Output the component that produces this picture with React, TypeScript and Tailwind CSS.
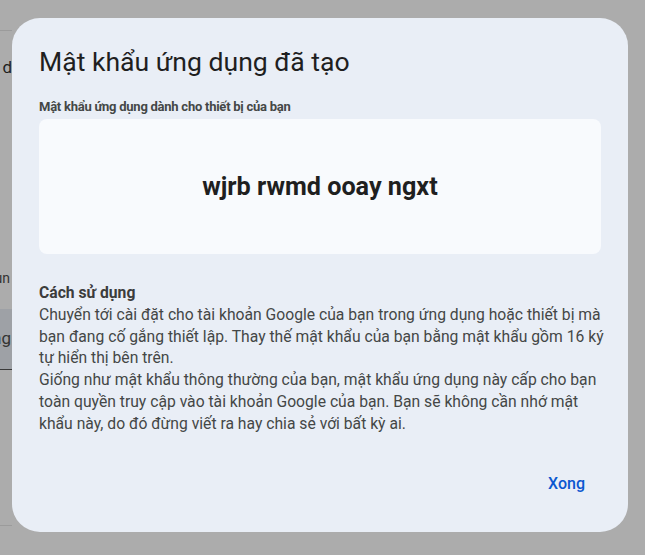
const bodyFont = { fontFamily: "Roboto, 'Noto Sans', sans-serif" };

function BackdropPage() {
  // the page behind the modal, dimmed by the scrim
  return (
    <div className="flex h-full w-[40px] flex-col text-[#1f1f1f]">
      <div className="h-[31px] border-b border-[#9b9b9b]" />
      <div className="mt-[26px] flex h-[22px] items-center justify-end overflow-hidden whitespace-nowrap text-[17px]">
        Tên ứng d
      </div>
      <div className="mt-[189px] flex h-[20px] items-center justify-end overflow-hidden whitespace-nowrap pr-[2px] text-[14px] text-[#333]">
        Bạn cần nhập tên ứng dụn
      </div>
      <div className="mt-[21px] flex h-[61px] items-center justify-end overflow-hidden whitespace-nowrap border-b border-[#3a3a3a] bg-[#9ea1a6] pr-[1px] text-[17px] text-[#333]">
        Tên ứng dụng
      </div>
      <div className="mt-[155px] h-px bg-[#9b9b9b]" />
    </div>
  );
}

export default function App() {
  return (
    <div className="relative h-[555px] w-[645px] overflow-hidden bg-[#acacac]" style={bodyFont}>
      <div className="ml-[-28px] h-full">
        <BackdropPage />
      </div>

      <div className="absolute left-[12px] top-[18px] flex h-[514px] w-[616px] flex-col rounded-[28px] bg-[#e9eef6] px-[27px] pt-[28px]">
        <h1 className="h-[32px] text-[26.6px] leading-[32px] text-[#1f1f1f]">Mật khẩu ứng dụng đã tạo</h1>

        <div className="mt-[19px] h-[20px] text-[13px] font-bold leading-[20px] tracking-[-0.25px] text-[#444746]">
          Mật khẩu ứng dụng dành cho thiết bị của bạn
        </div>

        <div className="mt-[2px] flex h-[135px] items-center justify-center rounded-[8px] bg-[#f8fafd]">
          <span className="text-[25.2px] font-bold text-[#1f1f1f]">wjrb rwmd ooay ngxt</span>
        </div>

        <div className="mt-[28px] w-[566px] text-[15.7px] leading-[21.8px] text-[#444746]">
          <div className="font-bold text-[#3c3c3c]">Cách sử dụng</div>
          <p>
            Chuyển tới cài đặt cho tài khoản Google của bạn trong ứng dụng hoặc thiết bị mà bạn đang cố gắng thiết
            lập. Thay thế mật khẩu của bạn bằng mật khẩu gồm 16 ký tự hiển thị bên trên.
          </p>
          <p>
            Giống như mật khẩu thông thường của bạn, mật khẩu ứng dụng này cấp cho bạn toàn quyền truy cập vào tài
            khoản Google của bạn. Bạn sẽ không cần nhớ mật khẩu này, do đó đừng viết ra hay chia sẻ với bất kỳ ai.
          </p>
        </div>

        <div className="mt-auto mb-[28px] flex justify-end">
          <button type="button" className="h-[40px] rounded-full px-[16px] text-[16px] font-medium text-[#0b57d0]">
            Xong
          </button>
        </div>
      </div>
    </div>
  );
}
